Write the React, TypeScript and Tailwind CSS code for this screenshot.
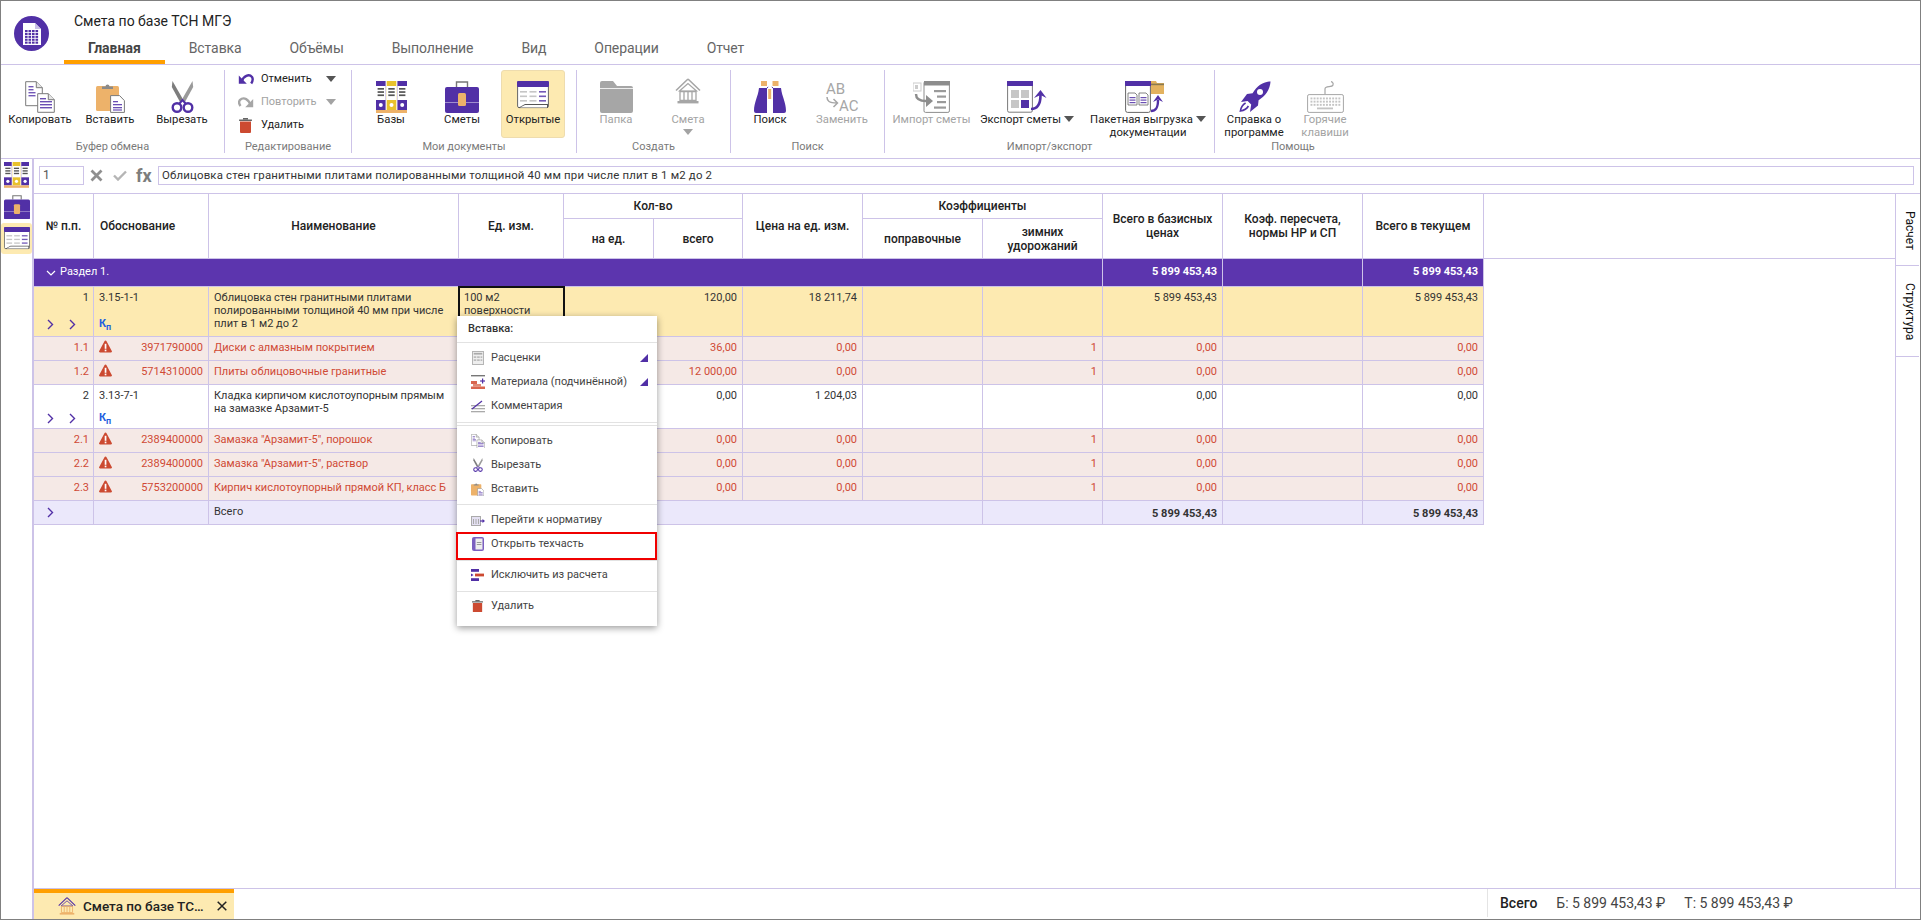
import React from "react";

const P = "#5130a6";
const G = "#a6a6a6";
const O = "#edb26a";

type IP = { w?: number };

const Logo = () => (
  <svg width="35" height="35" viewBox="0 0 35 35">
    <circle cx="17.5" cy="17.5" r="17.5" fill={P} />
    <path d="M9 7h12l6 6v16H9z" fill="#fff" />
    <path d="M21 7l6 6h-6z" fill="#c9bfe6" />
    <g fill={P}>
      {[0, 1, 2, 3, 4].map((r) =>
        [0, 1, 2, 3].map((c) => <rect key={`${r}${c}`} x={11 + c * 3.5} y={14 + r * 2.9} width="2.6" height="2.1" />)
      )}
    </g>
  </svg>
);

const CopyIcon = ({ w = 30 }: IP) => (
  <svg width={w} height={(w * 32) / 30} viewBox="0 0 30 32">
    <path d="M.7.7h10.6l6 6v18H.7z" fill="#fff" stroke="#7a7a7a" />
    <path d="M11.3.7v6h6" fill="#e5e5e5" stroke="#7a7a7a" />
    <g fill={P} opacity=".8">
      <rect x="3.5" y="5" width="5" height="1.4" />
      <rect x="3.5" y="8" width="5" height="1.4" />
      <rect x="3.5" y="11" width="7" height="1.4" />
      <rect x="3.5" y="14" width="7" height="1.4" />
    </g>
    <path d="M12.7 12.7h10.6l6 6v12.6H12.7z" fill="#fff" stroke="#7a7a7a" />
    <path d="M23.3 12.7v6h6" fill="#e5e5e5" stroke="#7a7a7a" />
    <g fill={P} opacity=".85">
      <rect x="15" y="17" width="6" height="1.4" />
      <rect x="15" y="20" width="12" height="1.4" />
      <rect x="15" y="23" width="12" height="1.4" />
      <rect x="15" y="26" width="12" height="1.4" />
    </g>
  </svg>
);

const PasteIcon = ({ w = 29 }: IP) => (
  <svg width={w} height={(w * 32) / 29} viewBox="0 0 29 32">
    <rect x="0" y="5" width="23" height="25" rx="1.5" fill={O} />
    <path d="M6 8V5.5h3.5a2 2 0 1 1 4 0H17V8z" fill="#8a8a8a" />
    <path d="M14.6 14.6h9l4.8 5v11.8H14.6z" fill="#fff" stroke="#7a7a7a" />
    <g fill={P} opacity=".85">
      <rect x="17" y="20" width="5" height="1.3" />
      <rect x="17" y="23" width="9" height="1.3" />
      <rect x="17" y="26" width="9" height="1.3" />
      <rect x="17" y="28.4" width="9" height="1.2" />
    </g>
  </svg>
);

const ScissorsIcon = ({ w = 23 }: IP) => (
  <svg width={w} height={(w * 32) / 23} viewBox="0 0 23 32">
    <path d="M1.5 0l10 17.5 -2.2 4L.8 6z" fill="#7d7d7d" />
    <path d="M21.5 0l-10 17.5 2.2 4L22.2 6z" fill="#9a9a9a" />
    <circle cx="6" cy="26.5" r="4.3" fill="none" stroke={P} strokeWidth="2.4" />
    <circle cx="17" cy="26.5" r="4.3" fill="none" stroke={P} strokeWidth="2.4" />
    <path d="M8 23l3.5-4 3.5 4" fill="none" stroke={P} strokeWidth="2" />
  </svg>
);

const UndoIcon = ({ c = P }: { c?: string }) => (
  <svg width="16" height="14" viewBox="0 0 16 14">
    <path d="M3.5 9.5C5.5 4 11 1.5 14 5c1.2 1.8 .8 4-.8 6.5" fill="none" stroke={c} strokeWidth="2.4" />
    <path d="M.8 3.5v8.2h8z" fill={c} />
  </svg>
);

const RedoIcon = ({ c = G }: { c?: string }) => (
  <svg width="16" height="14" viewBox="0 0 16 14">
    <path d="M12.5 9.5C11 5 6 1 1.8 5.2c-1 1.5-.6 4 .7 5.8" fill="none" stroke={c} strokeWidth="2.4" />
    <path d="M15.2 4v8.2h-8z" fill={c} />
  </svg>
);

const TrashIcon = ({ w = 13 }: IP) => (
  <svg width={w} height={(w * 15) / 13} viewBox="0 0 13 15">
    <rect x="0" y="1.4" width="13" height="1.6" rx=".4" fill="#666" />
    <rect x="4" y="0" width="5" height="1.6" fill="#666" />
    <path d="M1 3.4h11V14a1 1 0 0 1-1 1H2a1 1 0 0 1-1-1z" fill="#cc4a31" />
  </svg>
);

const BooksIcon = ({ w = 31 }: IP) => (
  <svg width={w} height={(w * 32) / 31} viewBox="0 0 31 32">
    {[0, 1, 2].map((i) => {
      const x = i * 10.7;
      const col = i === 1 ? "#e8c22c" : P;
      return (
        <g key={i}>
          <rect x={x} y="0" width="9.6" height="29" fill={col} />
          <rect x={x} y="5" width="9.6" height="14" fill="#fff" />
          <rect x={x + 1.6} y="7" width="6.4" height="1.7" fill="#555" />
          <rect x={x + 1.6} y="10.2" width="6.4" height="1.7" fill="#555" />
          <rect x={x + 1.6} y="13.4" width="6.4" height="1.7" fill="#555" />
          <circle cx={x + 4.8} cy="24" r="2" fill="#fff" />
        </g>
      );
    })}
    <rect x="0" y="29" width="31" height="3" fill={O} />
  </svg>
);

const CaseIcon = ({ w = 34 }: IP) => (
  <svg width={w} height={(w * 32) / 34} viewBox="0 0 34 32">
    <path d="M11.5 6V1h11v5" fill="none" stroke="#777" strokeWidth="1.4" />
    <rect x="0" y="6" width="34" height="26" rx="2" fill={P} />
    <rect x="0" y="21" width="34" height=".9" fill="#fff" opacity=".5" />
    <rect x="13" y="12" width="8" height="13" rx="1.5" fill={O} />
  </svg>
);

const OpenIcon = ({ w = 32 }: IP) => (
  <svg width={w} height={(w * 28) / 32} viewBox="0 0 32 28">
    <rect x=".6" y=".6" width="30.8" height="26" rx="1.5" fill="#fff" stroke="#666" />
    <rect x="0" y="0" width="32" height="6" rx="1" fill={P} />
    <g fill="#c6c6c6">
      <rect x="3" y="10" width="7" height="1.6" />
      <rect x="12.5" y="10" width="7" height="1.6" />
      <rect x="3" y="14.5" width="7" height="1.6" />
      <rect x="12.5" y="14.5" width="7" height="1.6" />
      <rect x="3" y="19" width="7" height="1.6" />
      <rect x="12.5" y="19" width="7" height="1.6" />
    </g>
    <g fill={P} opacity=".8">
      <rect x="22" y="10" width="7" height="1.6" />
      <rect x="22" y="14.5" width="7" height="1.6" />
      <rect x="22" y="19" width="7" height="1.6" />
    </g>
    <path d="M1 27l7-4h23v4z" fill="#555" />
    <path d="M3 26.5l5-2.4h22v2.4z" fill="#fff" />
  </svg>
);

const FolderIcon = () => (
  <svg width="33" height="32" viewBox="0 0 33 32">
    <path d="M0 2a2 2 0 0 1 2-2h11l4 5h14a2 2 0 0 1 2 2v23a2 2 0 0 1-2 2H2a2 2 0 0 1-2-2z" fill={G} />
    <rect x="0" y="7" width="33" height="1" fill="#fff" opacity=".8" />
  </svg>
);

const BuildingIcon = ({ w = 26, c = G, base = G }: { w?: number; c?: string; base?: string }) => (
  <svg width={w} height={w} viewBox="0 0 26 26">
    <path d="M13 1L1 12.5M13 1l12 11.5" fill="none" stroke={c} strokeWidth="1.6" />
    <path d="M13 5.5L4.5 13h17z" fill="none" stroke={c} strokeWidth="1.2" />
    <g fill="none" stroke={base} strokeWidth="1.3">
      <path d="M5 13.5h16v9H5zM9 13.5v9M13 13.5v9M17 13.5v9" />
    </g>
    <rect x="2.5" y="23" width="21" height="2.4" fill={base} />
  </svg>
);

const BinocularsIcon = () => (
  <svg width="32" height="32" viewBox="0 0 32 32">
    <rect x="7" y="0" width="6" height="5" fill={O} />
    <rect x="18.5" y="0" width="6" height="5" fill={O} />
    <rect x="14.2" y="8" width="3" height="10" fill={O} />
    <path d="M5 7h8v25H2a2 2 0 0 1-2-2c0-9 4-14 5-23z" fill={P} />
    <path d="M27 7h-8v25h11a2 2 0 0 0 2-2c0-9-4-14-5-23z" fill={P} />
    <path d="M13 7l1.2-1M19 7l-1.2-1" stroke={P} />
  </svg>
);

const ReplaceIcon = () => (
  <svg width="34" height="34" viewBox="0 0 34 34">
    <text x="1" y="13" fontFamily="Roboto, sans-serif" fontSize="15" fill={G}>AB</text>
    <text x="14" y="30" fontFamily="Roboto, sans-serif" fontSize="15" fill={G}>AC</text>
    <path d="M2 16c0 4 2 6 10 6M8.5 18l4 4-4 4" fill="none" stroke={G} strokeWidth="1.5" />
  </svg>
);

const ImportIcon = () => (
  <svg width="37" height="32" viewBox="0 0 37 32">
    <rect x="0" y="2" width="8" height="8" fill="#fff" stroke="#ccc" />
    <rect x="2" y="4" width="3" height="4" fill="#ccc" />
    <rect x="11" y=".6" width="25.4" height="30.8" rx="1.5" fill="#fff" stroke={"#8d8d8d"} />
    <rect x="11" y="0" width="26" height="4.5" fill="#8d8d8d" />
    <g fill="#9a9a9a">
      <rect x="21" y="9" width="12" height="2.2" />
      <rect x="24" y="14.5" width="9" height="2.2" />
      <rect x="24" y="20" width="9" height="2.2" />
      <rect x="21" y="25.5" width="12" height="2.2" />
    </g>
    <path d="M3 13c0 5 3 7 10 7" fill="none" stroke="#8d8d8d" strokeWidth="2.4" />
    <path d="M13 14l7 6-7 6z" fill="#8d8d8d" />
  </svg>
);

const ExportIcon = () => (
  <svg width="40" height="32" viewBox="0 0 40 32">
    <rect x=".6" y=".6" width="24.8" height="30.6" rx="1.5" fill="#fff" stroke="#7a7a7a" />
    <rect x="0" y="0" width="26" height="5" fill={P} />
    <rect x="4" y="9" width="8" height="8" fill="#c6c6c6" />
    <rect x="14" y="9" width="8" height="8" fill="#c6c6c6" />
    <rect x="4" y="19" width="8" height="8" fill="#c6c6c6" />
    <rect x="14" y="19" width="8" height="8" fill={P} />
    <path d="M24 28c6 0 9.5-4 9.5-14" fill="none" stroke={P} strokeWidth="2.6" />
    <path d="M27 17l6.5-8 6 8-6-3z" fill={P} />
  </svg>
);

const BatchIcon = () => (
  <svg width="39" height="32" viewBox="0 0 39 32">
    <rect x=".6" y=".6" width="24.8" height="30.8" rx="2" fill="#fff" stroke="#666" />
    <rect x="0" y="0" width="26" height="5" fill={P} />
    <path d="M3 12h7l2 2v10H3zM14 12h7l2 2v10h-9z" fill="#fff" stroke="#666" strokeWidth=".8" />
    <g fill={P} opacity=".85">
      <rect x="4.5" y="16" width="6" height="1.2" />
      <rect x="4.5" y="18.5" width="6" height="1.2" />
      <rect x="4.5" y="21" width="6" height="1.2" />
      <rect x="15.5" y="16" width="6" height="1.2" />
      <rect x="15.5" y="18.5" width="6" height="1.2" />
      <rect x="15.5" y="21" width="6" height="1.2" />
    </g>
    <path d="M26 0h5l1 2h7v11H26z" fill="#e3b25f" />
    <rect x="26" y="2.6" width="13" height="1.6" fill="#8a7a50" />
    <path d="M26 30c5 0 7-3 7-11" fill="none" stroke={P} strokeWidth="2.4" />
    <path d="M28 21l5-7 5 7-5-2.5z" fill={P} />
  </svg>
);

const RocketIcon = () => (
  <svg width="33" height="32" viewBox="0 0 33 32">
    <path d="M32.6.2c-8 .6-14 5-18 12L9 13 3 21l6.6-1 3.6 3.6L12 31l8-6.4.6-5.4c6.6-4 11.4-10.4 12-19.2z" fill={P} />
    <circle cx="22" cy="11" r="3" fill="#fff" />
    <path d="M7.6 22c-2.6 1.4-4.6 4-5.2 8 3.6-.6 6.6-2.4 8-5" fill="none" stroke={P} strokeWidth="1.6" />
  </svg>
);

const KeyboardIcon = () => (
  <svg width="37" height="32" viewBox="0 0 37 32">
    <path d="M18 13V8c0-4 7-1 8-4s-2-3.4-2-3.4" fill="none" stroke={G} strokeWidth="1.2" />
    <rect x=".6" y="13.6" width="35.8" height="17.8" rx="1.5" fill="#fff" stroke={G} />
    <g fill="#c4c4c4">
      {[0, 1, 2].map((r) =>
        [0, 1, 2, 3, 4, 5, 6, 7, 8, 9].map((c) => (
          <rect key={`${r}-${c}`} x={3.5 + c * 3.1} y={16.5 + r * 3.2} width="1.9" height="1.9" />
        ))
      )}
      <rect x="10" y="26.5" width="16" height="1.8" />
    </g>
  </svg>
);

const Caret = ({ c = "#555", w = 10 }: { c?: string; w?: number }) => (
  <svg width={w} height={(w * 6) / 10} viewBox="0 0 10 6">
    <path d="M0 0h10L5 6z" fill={c} />
  </svg>
);

const Chevron = ({ c = P }: { c?: string }) => (
  <svg width="7" height="11" viewBox="0 0 7 11">
    <path d="M1 1l4.5 4.5L1 10" fill="none" stroke={c} strokeWidth="1.4" />
  </svg>
);

const Warn = () => (
  <svg width="13" height="13" viewBox="0 0 13 13">
    <path d="M6.5.6a1 1 0 0 1 .9.5l5.4 10a1 1 0 0 1-.9 1.5H1.1a1 1 0 0 1-.9-1.5l5.4-10a1 1 0 0 1 .9-.5z" fill="#cc4a31" />
    <rect x="5.7" y="3.8" width="1.7" height="5" fill="#fff" />
    <rect x="5.7" y="9.6" width="1.7" height="1.7" fill="#fff" />
  </svg>
);

/* menu icons */
const MiRates = () => (
  <svg width="12" height="14" viewBox="0 0 14 16">
    <rect x=".5" y=".5" width="13" height="15" fill="#eee" stroke="#aaa" />
    <rect x="2" y="2" width="10" height="2" fill="#aaa" />
    <g fill="#bbb">
      <rect x="2" y="6" width="3" height="2" /><rect x="6" y="6" width="3" height="2" /><rect x="10" y="6" width="2" height="2" />
      <rect x="2" y="9.5" width="3" height="2" /><rect x="6" y="9.5" width="3" height="2" /><rect x="10" y="9.5" width="2" height="2" />
    </g>
  </svg>
);
const MiMaterial = () => (
  <svg width="14" height="14" viewBox="0 0 14 14">
    <rect x="0" y="0" width="14" height="1.4" fill="#777" />
    <rect x="0" y="6" width="6" height="3" fill="#d9664f" />
    <rect x="2" y="9" width="8" height="2.5" fill="#e08a75" />
    <rect x="0" y="11.5" width="14" height="2.5" fill="#d9664f" />
    <rect x="11" y="3.5" width="1.2" height="5" fill={P} />
    <rect x="9.1" y="5.4" width="5" height="1.2" fill={P} />
  </svg>
);
const MiComment = () => (
  <svg width="14" height="13" viewBox="0 0 14 13">
    <g fill="#aaa">
      <rect x="0" y="5" width="14" height="1.3" /><rect x="0" y="8" width="14" height="1.3" /><rect x="0" y="11" width="14" height="1.3" />
    </g>
    <path d="M1 9L11 1" stroke={P} strokeWidth="1.3" />
  </svg>
);
const MiGoto = () => (
  <svg width="14" height="13" viewBox="0 0 14 13">
    <rect x=".5" y="2.5" width="9" height="9" fill="#e4e0f2" stroke="#aaa" />
    <path d="M2.5 5v5M5 5v5M7.5 5v5" stroke="#aaa" />
    <path d="M9 7h3" stroke={P} strokeWidth="1.2" />
    <path d="M11.5 5l2.5 2-2.5 2z" fill={P} />
  </svg>
);
const MiBook = () => (
  <svg width="12" height="14" viewBox="0 0 12 14">
    <rect x="0" y="0" width="12" height="14" rx="2" fill="#7b5fc0" />
    <rect x="3.5" y="1.5" width="7" height="11" fill="#eee" />
    <rect x="4.8" y="5" width="4.6" height="1" fill="#999" />
    <rect x="4.8" y="7" width="4.6" height="1" fill="#999" />
  </svg>
);
const MiExclude = () => (
  <svg width="13" height="12" viewBox="0 0 13 12">
    <rect x="0" y="0" width="8" height="2.8" fill={P} />
    <rect x="0" y="9.2" width="8" height="2.8" fill={P} />
    <rect x="4" y="4.6" width="9" height="2.8" fill="#cc4a31" />
    <path d="M0 4.4l2.6 1.6L0 7.6z" fill={P} />
  </svg>
);

const border = "border-[#cdc3e8]";

function RibbonButton({
  icon, label, disabled, active, width, caret,
}: { icon: React.ReactNode; label: React.ReactNode; disabled?: boolean; active?: boolean; width: string; caret?: boolean }) {
  return (
    <div
      className={`flex flex-col items-center h-[68px] pt-[10px] rounded-[3px] border ${width} ${active ? "bg-[#fdeab1] border-[#eedcae]" : "border-transparent"} ${disabled ? "text-[#a3a3a3]" : "text-[#222]"}`}
    >
      <div className="h-[32px] flex items-start justify-center">{icon}</div>
      <div className="text-center leading-[13px] text-[11.3px] whitespace-nowrap">
        {label}
        {caret && <span className="inline-block ml-[3px] align-[1px]"><Caret /></span>}
      </div>
    </div>
  );
}

function Group({ width, label, children, noBorder, cls = "" }: { width: string; label: string; children: React.ReactNode; noBorder?: boolean; cls?: string }) {
  return (
    <div className={`flex flex-col h-full shrink-0 ${width} ${noBorder ? "" : `border-r ${border}`}`}>
      <div className={`h-[70px] flex items-start ${cls}`}>{children}</div>
      <div className="h-[13px] leading-[14px] text-[11px] text-[#7a7a7a] text-center">{label}</div>
    </div>
  );
}

type Row = {
  kind: "pos" | "res";
  n: string; code: string; name: string;
  qty: string; price: string; winter?: string; base: string; cur: string;
  sel?: boolean;
};

const rows: Row[] = [
  { kind: "pos", sel: true, n: "1", code: "3.15-1-1", name: "Облицовка стен гранитными плитами полированными толщиной 40 мм при числе плит в 1 м2 до 2", qty: "120,00", price: "18 211,74", base: "5 899 453,43", cur: "5 899 453,43" },
  { kind: "res", n: "1.1", code: "3971790000", name: "Диски с алмазным покрытием", qty: "36,00", price: "0,00", winter: "1", base: "0,00", cur: "0,00" },
  { kind: "res", n: "1.2", code: "5714310000", name: "Плиты облицовочные гранитные", qty: "12 000,00", price: "0,00", winter: "1", base: "0,00", cur: "0,00" },
  { kind: "pos", n: "2", code: "3.13-7-1", name: "Кладка кирпичом кислотоупорным прямым на замазке Арзамит-5", qty: "0,00", price: "1 204,03", base: "0,00", cur: "0,00" },
  { kind: "res", n: "2.1", code: "2389400000", name: "Замазка \"Арзамит-5\", порошок", qty: "0,00", price: "0,00", winter: "1", base: "0,00", cur: "0,00" },
  { kind: "res", n: "2.2", code: "2389400000", name: "Замазка \"Арзамит-5\", раствор", qty: "0,00", price: "0,00", winter: "1", base: "0,00", cur: "0,00" },
  { kind: "res", n: "2.3", code: "5753200000", name: "Кирпич кислотоупорный прямой КП, класс Б", qty: "0,00", price: "0,00", winter: "1", base: "0,00", cur: "0,00" },
];

const th = `border-r border-b ${border} font-medium text-[12px] leading-[14px] text-[#222] text-center align-middle`;
const td = `border-r border-b ${border} px-[5px] pt-[4px] align-top leading-[13px] text-right`;

function MenuItem({ icon, label, arrow, boxed }: { icon: React.ReactNode; label: string; arrow?: boolean; boxed?: boolean }) {
  return (
    <div className="relative h-[24px] flex items-center text-[11px] text-[#444]">
      <div className="w-[34px] flex justify-center pl-[7px] shrink-0">{icon}</div>
      <div className="flex-1 whitespace-nowrap">{label}</div>
      {arrow && (
        <svg className="mr-[9px]" width="8" height="8" viewBox="0 0 8 8"><path d="M8 0v8H0z" fill={P} /></svg>
      )}
      {boxed && <div className="absolute -left-[1px] right-0 top-0 h-[28px] border-2 border-[#f00000]" />}
    </div>
  );
}

export default function App() {
  return (
    <div className={`relative h-screen w-full flex flex-col border border-[#808080] bg-white overflow-hidden text-[11px] text-[#333] font-['Roboto',sans-serif]`}>
      {/* Title and tabs */}
      <div className={`h-[64px] shrink-0 border-b ${border} flex`}>
        <div className="w-[63px] shrink-0 pl-[13px] pt-[15px]"><Logo /></div>
        <div className="flex flex-col">
          <div className="pl-[10px] pt-[11px] h-[35px] text-[14px] leading-[18px] text-[#222]">Смета по базе ТСН МГЭ</div>
          <div className="flex text-[14px] leading-[18px] text-[#666]">
            {["Главная", "Вставка", "Объёмы", "Выполнение", "Вид", "Операции", "Отчет"].map((t, i) => (
              <div key={t} className={`px-6 h-[28px] pt-[3px] ${i === 0 ? "border-b-4 border-[#ff9f00] font-bold text-[#444]" : "tracking-[-0.1px]"}`}>{t}</div>
            ))}
          </div>
        </div>
      </div>

      {/* Ribbon */}
      <div className={`h-[94px] shrink-0 border-b ${border} flex py-[5px]`}>
        <Group width="w-[224px]" label="Буфер обмена" cls="pl-[2px]">
          <RibbonButton width="w-[74px]" icon={<CopyIcon />} label="Копировать" />
          <RibbonButton width="w-[66px]" icon={<PasteIcon />} label="Вставить" />
          <RibbonButton width="w-[78px]" icon={<ScissorsIcon />} label="Вырезать" />
        </Group>
        <Group width="w-[127px]" label="Редактирование">
          <div className="flex flex-col gap-[5px] pl-[13px] w-full text-[11px]">
            <div className="h-[18px] flex items-center text-[#222]">
              <div className="w-[23px]"><UndoIcon /></div>
              <div className="w-[65px]">Отменить</div>
              <Caret />
            </div>
            <div className="h-[18px] flex items-center text-[#a3a3a3]">
              <div className="w-[23px]"><RedoIcon /></div>
              <div className="w-[65px]">Повторить</div>
              <Caret c="#a3a3a3" />
            </div>
            <div className="h-[18px] flex items-center text-[#222]">
              <div className="w-[23px] pl-[1px]"><TrashIcon /></div>
              <div>Удалить</div>
            </div>
          </div>
        </Group>
        <Group width="w-[225px]" label="Мои документы" cls="pl-[7px] gap-[7px]">
          <RibbonButton width="w-[64px]" icon={<BooksIcon />} label="Базы" />
          <RibbonButton width="w-[64px]" icon={<CaseIcon />} label="Сметы" />
          <RibbonButton width="w-[64px]" active icon={<OpenIcon />} label="Открытые" />
        </Group>
        <Group width="w-[154px]" label="Создать" cls="pl-[7px] gap-[8px]">
          <RibbonButton width="w-[64px]" disabled icon={<FolderIcon />} label="Папка" />
          <RibbonButton
            width="w-[64px]"
            disabled
            icon={<div className="-mt-[3px]"><BuildingIcon /></div>}
            label={<>Смета<div className="flex justify-center mt-[3px]"><Caret c="#a3a3a3" /></div></>}
          />
        </Group>
        <Group width="w-[154px]" label="Поиск" cls="pl-[7px] gap-[8px]">
          <RibbonButton width="w-[64px]" icon={<BinocularsIcon />} label="Поиск" />
          <RibbonButton width="w-[64px]" disabled icon={<ReplaceIcon />} label="Заменить" />
        </Group>
        <Group width="w-[330px]" label="Импорт/экспорт" cls="pl-[1px]">
          <RibbonButton width="w-[91px]" disabled icon={<ImportIcon />} label="Импорт сметы" />
          <RibbonButton width="w-[100px] mr-[7px]" icon={<ExportIcon />} label="Экспорт сметы" caret />
          <RibbonButton width="w-[128px]" icon={<div className="-ml-[7px]"><BatchIcon /></div>} label={<>Пакетная выгрузка<span className="inline-block ml-[3px] align-[1px]"><Caret /></span><br />документации</>} />
        </Group>
        <Group width="w-[156px]" label="Помощь" noBorder cls="pl-[9px] gap-[11px]">
          <RibbonButton width="w-[60px]" icon={<RocketIcon />} label={<>Справка о<br />программе</>} />
          <RibbonButton width="w-[60px]" disabled icon={<KeyboardIcon />} label={<>Горячие<br />клавиши</>} />
        </Group>
      </div>

      {/* Body */}
      <div className="flex-1 flex min-h-0">
        <div className={`w-[33px] shrink-0 border-r-2 ${border} flex flex-col items-center`}>
          <div className="mt-[3px]"><BooksIcon w={25} /></div>
          <div className="mt-[7px]"><CaseIcon w={26} /></div>
          <div className="mt-[4px] w-[31px] h-[31px] bg-[#fdeab1] rounded-[3px] flex items-center justify-center"><OpenIcon w={26} /></div>
        </div>

        <div className="flex-1 flex flex-col min-w-0">
          {/* Formula bar */}
          <div className="h-[34px] shrink-0 flex items-start pt-[7px] pl-[5px] pr-[6px]">
            <div className={`w-[45px] h-[19px] border ${border} leading-[17px] pl-[3px] text-[12px] text-[#555] shrink-0`}>1</div>
            <svg className="ml-[6px] mt-[3px] shrink-0" width="13" height="13" viewBox="0 0 13 13"><path d="M1.5 1.5l10 10M11.5 1.5l-10 10" stroke="#8f8f8f" strokeWidth="2.8" /></svg>
            <svg className="ml-[10px] mt-[4px] shrink-0" width="14" height="11" viewBox="0 0 14 11"><path d="M1 5.5l4 4 8-8" fill="none" stroke="#b5b5b5" strokeWidth="2.4" /></svg>
            <div className="ml-[9px] w-[22px] text-[18px] leading-[19px] font-bold text-[#7d7d7d] shrink-0">fx</div>
            <div className={`flex-1 h-[19px] border ${border} leading-[17px] pl-[3px] text-[11.4px] tracking-[0.18px] text-[#333] whitespace-nowrap overflow-hidden`}>
              Облицовка стен гранитными плитами полированными толщиной 40 мм при числе плит в 1 м2 до 2
            </div>
          </div>

          {/* Table + side tabs */}
          <div className={`flex-1 flex min-h-0 border-t ${border}`}>
            <div className="flex-1 min-w-0">
              <table className="w-full table-fixed border-separate border-spacing-0 text-[11px]">
                <colgroup>
                  {[60, 115, 250, 105, 90, 89, 120, 120, 120, 120, 140, 121].map((w, i) => (
                    <col key={i} style={{ width: w }} />
                  ))}
                  <col />
                </colgroup>
                <thead>
                  <tr className="h-[25px]">
                    <th rowSpan={2} className={th}>№ п.п.</th>
                    <th rowSpan={2} className={`${th} !text-left pl-[6px]`}>Обоснование</th>
                    <th rowSpan={2} className={th}>Наименование</th>
                    <th rowSpan={2} className={th}>Ед. изм.</th>
                    <th colSpan={2} className={th}>Кол-во</th>
                    <th rowSpan={2} className={th}>Цена на ед. изм.</th>
                    <th colSpan={2} className={th}>Коэффициенты</th>
                    <th rowSpan={2} className={th}>Всего в базисных<br />ценах</th>
                    <th rowSpan={2} className={th}>Коэф. пересчета,<br />нормы НР и СП</th>
                    <th rowSpan={2} className={th}>Всего в текущем</th>
                    <th rowSpan={2} className={`border-b ${border}`}></th>
                  </tr>
                  <tr className="h-[40px]">
                    <th className={th}>на ед.</th>
                    <th className={th}>всего</th>
                    <th className={th}>поправочные</th>
                    <th className={th}>зимних<br />удорожаний</th>
                  </tr>
                </thead>
                <tbody>
                  <tr className="h-[28px] bg-[#5c35ae] text-white">
                    <td colSpan={9} className={`border-r border-b ${border} pl-[12px] align-middle`}>
                      <div className="flex items-center gap-[4px]">
                        <svg width="10" height="6" viewBox="0 0 10 6"><path d="M1 1l4 4 4-4" fill="none" stroke="#fff" strokeWidth="1.2" /></svg>
                        <span>Раздел 1.</span>
                      </div>
                    </td>
                    <td className={`border-r border-b ${border} font-bold text-right pr-[5px] align-middle`}>5 899 453,43</td>
                    <td className={`border-r border-b ${border}`}></td>
                    <td className={`border-r border-b ${border} font-bold text-right pr-[5px] align-middle`}>5 899 453,43</td>
                  </tr>
                  {rows.map((r, idx) => {
                    const isRes = r.kind === "res";
                    const bg = isRes ? "bg-[#f5e9e6] text-[#d04a35]" : r.sel ? "bg-[#fdeab1] text-[#333]" : "bg-white text-[#333]";
                    const h = isRes ? "h-[24px]" : r.sel ? "h-[50px]" : "h-[44px]";
                    return (
                      <tr key={idx} className={`${h} ${bg}`}>
                        <td className={`${td} !px-0`}>
                          {isRes ? (
                            <div className="pr-[4px]">{r.n}</div>
                          ) : (
                            <div className="flex flex-col h-full">
                              <div className="pr-[4px]">{r.n}</div>
                              <div className={`flex gap-[15px] pl-[13px] ${r.sel ? "mt-[15px]" : "mt-[11px]"}`}>
                                <Chevron /><Chevron />
                              </div>
                            </div>
                          )}
                        </td>
                        <td className={`${td} !text-left`}>
                          {isRes ? (
                            <div className="flex justify-between items-start -mt-[1px]">
                              <Warn />
                              <span className="mt-[1px]">{r.code}</span>
                            </div>
                          ) : (
                            <div>
                              <div>{r.code}</div>
                              <div className={`font-bold text-[#1f5fe0] ${r.sel ? "mt-[13px]" : "mt-[9px]"} leading-[14px]`}>
                                К<span className="text-[9px] align-sub leading-none">п</span>
                              </div>
                            </div>
                          )}
                        </td>
                        <td className={`${td} !text-left`}>{r.name}</td>
                        <td className={`${td} !text-left ${r.sel ? "outline-2 -outline-offset-1 outline-[#111]" : ""}`}>
                          {r.sel ? <>100 м2<br />поверхности</> : ""}
                        </td>
                        <td colSpan={2} className={td}>{r.qty}</td>
                        <td className={td}>{r.price}</td>
                        <td className={td}></td>
                        <td className={td}>{r.winter}</td>
                        <td className={td}>{r.base}</td>
                        <td className={td}></td>
                        <td className={td}>{r.cur}</td>
                      </tr>
                    );
                  })}
                  <tr className="h-[24px] bg-[#ebe8fb] text-[#333]">
                    <td className={`${td} !text-left !pl-[13px] !pt-[6px]`}><Chevron /></td>
                    <td className={td}></td>
                    <td className={`${td} !text-left`}>Всего</td>
                    <td colSpan={5} className={td}></td>
                    <td className={td}></td>
                    <td className={`${td} font-bold !pt-[6px]`}>5 899 453,43</td>
                    <td className={td}></td>
                    <td className={`${td} font-bold !pt-[6px]`}>5 899 453,43</td>
                  </tr>
                </tbody>
              </table>
            </div>
            <div className={`w-[25px] shrink-0 border-l ${border} text-[12px] text-[#111]`}>
              <div className={`h-[72px] border-b ${border} pt-[17px] pl-[5px] [writing-mode:vertical-rl]`}>Расчет</div>
              <div className={`h-[91px] border-b ${border} pt-[17px] pl-[5px] [writing-mode:vertical-rl]`}>Структура</div>
            </div>
          </div>

          {/* Footer */}
          <div className={`h-[31px] shrink-0 border-t ${border} flex justify-between`}>
            <div className="w-[200px] bg-[#fdeab1] border-t-4 border-[#ff9f00] flex items-center pl-[24px] pr-[7px]">
              <BuildingIcon w={18} c={P} base={O} />
              <div className="ml-[7px] w-[126px] text-[13.5px] font-medium text-[#222] truncate">Смета по базе ТСН МГЭ</div>
              <svg className="ml-[8px]" width="10" height="10" viewBox="0 0 10 10"><path d="M.7.7l8.6 8.6M9.3.7L.7 9.3" stroke="#222" strokeWidth="1.5" /></svg>
            </div>
            <div className="w-[433px] mb-[2px] border-l border-[#e4e4e4] flex items-center pl-[12px] text-[14px] text-[#444] gap-[19px]">
              <span className="font-medium text-[#222]">Всего</span>
              <span>Б: 5 899 453,43 ₽</span>
              <span>Т: 5 899 453,43 ₽</span>
            </div>
          </div>
        </div>
      </div>

      {/* Context menu */}
      <div className="absolute left-[456px] top-[315px] w-[200px] bg-white shadow-[0_2px_7px_rgba(0,0,0,0.4)]">
        <div className="h-[27px] border-b border-[#e2e2e2] flex items-center pl-[11px] font-medium text-[11px] text-[#333]">Вставка:</div>
        <div className="pt-[3px]">
          <MenuItem icon={<MiRates />} label="Расценки" arrow />
          <MenuItem icon={<MiMaterial />} label="Материала (подчинённой)" arrow />
          <MenuItem icon={<MiComment />} label="Комментария" />
        </div>
        <div className="mt-[4px] h-[4px] border-y border-[#e2e2e2]" />
        <div className="pt-[3px]">
          <MenuItem icon={<CopyIcon w={14} />} label="Копировать" />
          <MenuItem icon={<ScissorsIcon w={10} />} label="Вырезать" />
          <MenuItem icon={<PasteIcon w={13} />} label="Вставить" />
        </div>
        <div className="mt-[3px] border-t border-[#e2e2e2]" />
        <div className="pt-[3px]">
          <MenuItem icon={<MiGoto />} label="Перейти к нормативу" />
          <MenuItem icon={<MiBook />} label="Открыть техчасть" boxed />
        </div>
        <div className="mt-[4px] border-t border-[#e2e2e2]" />
        <div className="pt-[2px]">
          <MenuItem icon={<MiExclude />} label="Исключить из расчета" />
        </div>
        <div className="mt-[4px] border-t border-[#e2e2e2]" />
        <div className="pt-[2px] pb-[8px]">
          <MenuItem icon={<TrashIcon w={11} />} label="Удалить" />
        </div>
      </div>
    </div>
  );
}
